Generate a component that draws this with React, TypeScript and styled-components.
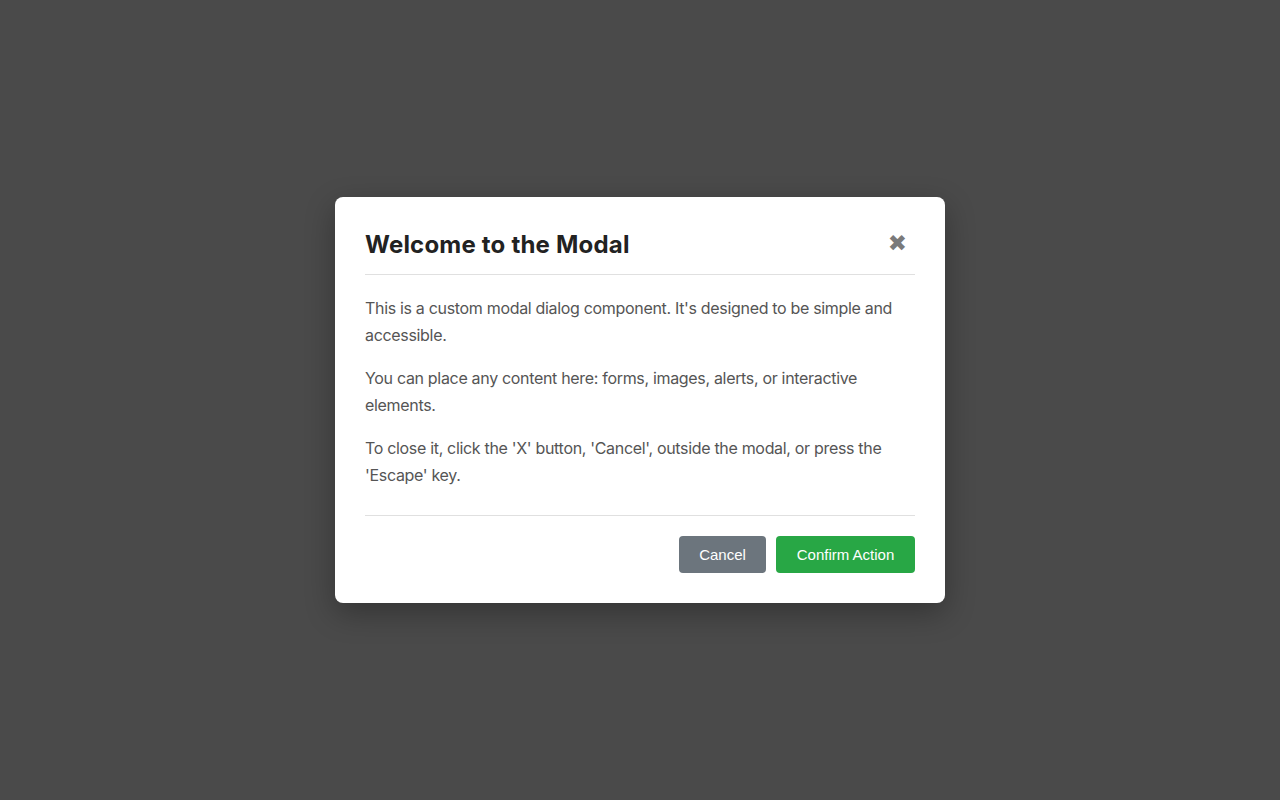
import React from "react";
import styled, { createGlobalStyle } from "styled-components";

const GlobalStyle = createGlobalStyle`
  html, body { margin: 0; padding: 0; height: 100%; }
  body {
    background: #4a4a4a;
    font-family: Inter, "Noto Sans", sans-serif;
  }
  #root { height: 100%; }
`;

const Overlay = styled.div`
  height: 100vh;
  display: flex;
  align-items: center;
  justify-content: center;
`;

const Dialog = styled.div`
  width: 610px;
  box-sizing: border-box;
  background: #fff;
  border-radius: 8px;
  padding: 30px;
  box-shadow: 0 10px 30px rgba(0, 0, 0, 0.3);
`;

const Header = styled.div`
  display: flex;
  align-items: center;
  justify-content: space-between;
  height: 32px;
  padding-bottom: 15px;
  border-bottom: 1px solid #e0e0e0;
`;

const Title = styled.h2`
  margin: 2px 0 0;
  font-size: 24px;
  font-weight: 700;
  color: #222;
  letter-spacing: 0.2px;
`;

const CloseButton = styled.button`
  background: none;
  border: none;
  padding: 0 8px 0 0;
  font-size: 23px;
  line-height: 1;
  color: #7a7a7a;
  cursor: pointer;
  font-family: "DejaVu Sans", sans-serif;
`;

const Body = styled.div`
  padding: 20px 0 10px;
`;

const Paragraph = styled.p`
  margin: 0 0 16px;
  font-size: 16px;
  line-height: 27px;
  letter-spacing: -0.32px;
  color: #555;
`;

const Footer = styled.div`
  display: flex;
  justify-content: flex-end;
  gap: 10px;
  padding-top: 20px;
  border-top: 1px solid #e0e0e0;
`;

const Button = styled.button<{ $variant: "secondary" | "success" }>`
  border: none;
  border-radius: 4px;
  padding: 10px 20px;
  min-width: ${(p) => (p.$variant === "success" ? "139px" : "87px")};
  font-family: "Liberation Sans", Arial, sans-serif;
  font-size: 15px;
  line-height: 17px;
  color: #fff;
  cursor: pointer;
  background: ${(p) => (p.$variant === "success" ? "#28a745" : "#6c757d")};
`;

export default function App() {
  return (
    <>
      <GlobalStyle />
      <Overlay>
        <Dialog role="dialog" aria-modal="true">
          <Header>
            <Title>Welcome to the Modal</Title>
            <CloseButton aria-label="Close">✖</CloseButton>
          </Header>
          <Body>
            <Paragraph>
              This is a custom modal dialog component. It's designed to be simple and accessible.
            </Paragraph>
            <Paragraph>
              You can place any content here: forms, images, alerts, or interactive elements.
            </Paragraph>
            <Paragraph>
              To close it, click the 'X' button, 'Cancel', outside the modal, or press the 'Escape' key.
            </Paragraph>
          </Body>
          <Footer>
            <Button $variant="secondary">Cancel</Button>
            <Button $variant="success">Confirm Action</Button>
          </Footer>
        </Dialog>
      </Overlay>
    </>
  );
}
